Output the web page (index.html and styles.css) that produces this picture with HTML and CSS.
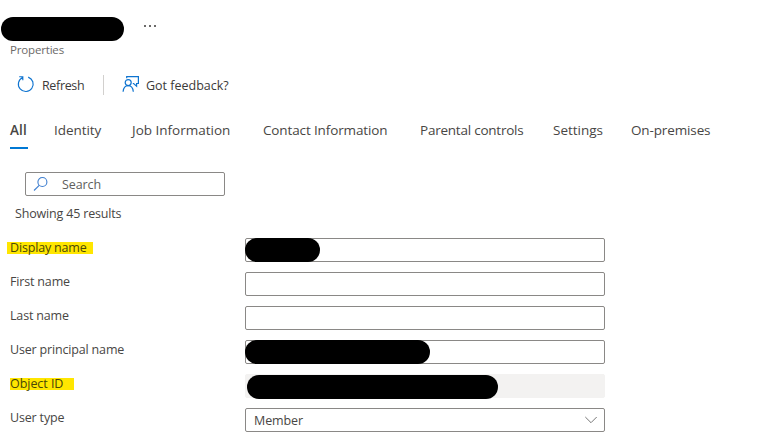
FILE: index.html
```html
<!DOCTYPE html>
<html lang="en">
<head>
<meta charset="utf-8">
<title>Properties</title>
<link rel="stylesheet" href="styles.css">
</head>
<body>
<header class="header">
  <div class="title-row">
    <span class="redacted redacted-title"></span>
    <span class="more"><i></i><i></i><i></i></span>
  </div>
  <div class="subtitle"><span>Properties</span></div>
</header>
<div class="toolbar">
  <svg class="icon-refresh" width="18" height="18" viewBox="0 0 18 18" fill="none" stroke="#0f74d0" stroke-width="1.15"><path d="M11.2 2.1A7.4 7.4 0 1 1 5.6 2.4M2.2 1.7H5.8V5.3"/></svg>
  <span class="command refresh">Refresh</span>
  <span class="divider"></span>
  <svg class="icon-feedback" width="18" height="18" viewBox="0 0 18 18" fill="none" stroke="#0f74d0" stroke-width="1.2"><path d="M4.7 3.2V1.6H16.4V8.5H14.6V11.1L11.6 8.5H10.8"/><circle cx="6.2" cy="7.6" r="3"/><path d="M1.1 16.7C1.5 12.8 3.4 10.7 6.2 10.7S10.9 12.8 11.3 16.7"/></svg>
  <span class="command feedback">Got feedback?</span>
</div>
<nav class="tabs">
  <span class="tab active"><b>All</b></span>
  <span class="tab identity">Identity</span>
  <span class="tab job">Job Information</span>
  <span class="tab contact">Contact Information</span>
  <span class="tab parental">Parental controls</span>
  <span class="tab settings">Settings</span>
  <span class="tab premises">On-premises</span>
</nav>
<div class="search">
  <svg width="16" height="16" viewBox="0 0 16 16" fill="none" stroke="#3f7fd0" stroke-width="1.1"><circle cx="9.4" cy="6" r="4.5"/><path d="M6.2 9.3L1 14.5"/></svg>
  <span>Search</span>
</div>
<div class="count"><span>Showing 45 results</span></div>
<main class="form">
  <div class="row"><span class="label"><mark class="mark-display">Display name</mark></span><div class="field"><span class="redacted redacted-display"></span></div></div>
  <div class="row"><span class="label">First name</span><div class="field"></div></div>
  <div class="row"><span class="label">Last name</span><div class="field"></div></div>
  <div class="row"><span class="label">User principal name</span><div class="field"><span class="redacted redacted-upn"></span></div></div>
  <div class="row"><span class="label"><mark class="mark-object">Object ID</mark></span><div class="field disabled"><span class="redacted redacted-object"></span></div></div>
  <div class="row"><span class="label">User type</span><div class="field select"><span>Member</span><svg width="14" height="8" viewBox="0 0 14 8" fill="none" stroke="#777" stroke-width="1"><path d="M1.3 1L7 6.7L12.7 1"/></svg></div></div>
</main>
</body>
</html>
```
FILE: styles.css
```css
* { box-sizing: border-box; }
body {
  margin: 0;
  width: 764px;
  height: 441px;
  overflow: hidden;
  background: #fff;
  color: #484644;
  font: 400 12.5px/18px "Open Sans", "Noto Sans", sans-serif;
  letter-spacing: -0.17px;
  white-space: nowrap;
}
.header { height: 70px; padding-top: 17px; }
.title-row { display: flex; height: 24px; }
.redacted { display: block; height: 24px; border-radius: 12px; background: #000; }
.redacted-title { width: 123px; margin-left: 1px; }
.more { display: flex; gap: 3px; margin: 8px 0 0 20px; }
.more i { width: 2px; height: 2px; background: #6b6a69; }
.subtitle { padding-left: 10px; font-size: 11.5px; letter-spacing: -0.17px; color: #6c6a68; }
.toolbar { display: flex; align-items: center; height: 30px; padding-left: 17px; color: #3b3a39; }
.toolbar svg { margin-top: -2px; }
.command { padding-top: 2px; }
.refresh { width: 61px; margin-left: 7px; letter-spacing: -0.35px; }
.feedback { letter-spacing: 0; }
.divider { width: 1px; height: 20px; margin-right: 18px; background: #d2d0ce; }
.icon-feedback { margin-right: 6px; }
.tabs {
  display: grid;
  grid-template-columns: 44px 78px 131px 157px 133px 78px 90px;
  height: 49px;
  margin-left: 10px;
  padding-top: 18px;
  font-size: 13.5px;
  line-height: 24px;
  letter-spacing: -0.13px;
}
.job, .settings { letter-spacing: 0; }
.identity { letter-spacing: -0.05px; }
.parental { letter-spacing: -0.23px; }
.active { width: 18px; height: 31px; border-bottom: 2px solid #0078d4; letter-spacing: 0.1px; }
.active b { font-weight: 600; }
.search {
  display: flex;
  align-items: center;
  width: 200px;
  height: 24px;
  margin: 23px 0 0 25px;
  padding-left: 7px;
  border: 1px solid #8a8886;
  border-radius: 2px;
  color: #605e5c;
}
.search span { margin-left: 13px; padding-top: 2px; letter-spacing: -0.1px; }
.count { height: 42px; padding: 9px 0 0 15px; }
.form { display: grid; row-gap: 10px; padding-left: 10px; }
.row { display: grid; grid-template-columns: 235px 360px; height: 24px; }
.label { line-height: 20px; }
.field { height: 24px; border: 1px solid #8a8886; border-radius: 2px; }
.field .redacted { margin: -1px 0 0 -1px; }
.redacted-display { width: 75px; }
.redacted-upn { width: 185px; }
.field .redacted-object { width: 251px; margin: 0 0 0 1px; }
.disabled { background: #f3f2f1; border-color: #f3f2f1; }
mark { display: block; height: 12px; margin-top: 4px; line-height: 12px; background: #ffe600; color: #4a4708; }
.mark-display { width: 86px; margin-left: -3px; padding-left: 3px; }
.mark-object { width: 64px; letter-spacing: -0.05px; }
.select { display: flex; align-items: center; justify-content: space-between; padding: 0 6px 0 8px; }
.select span { padding-top: 2px; letter-spacing: -0.1px; }
```
